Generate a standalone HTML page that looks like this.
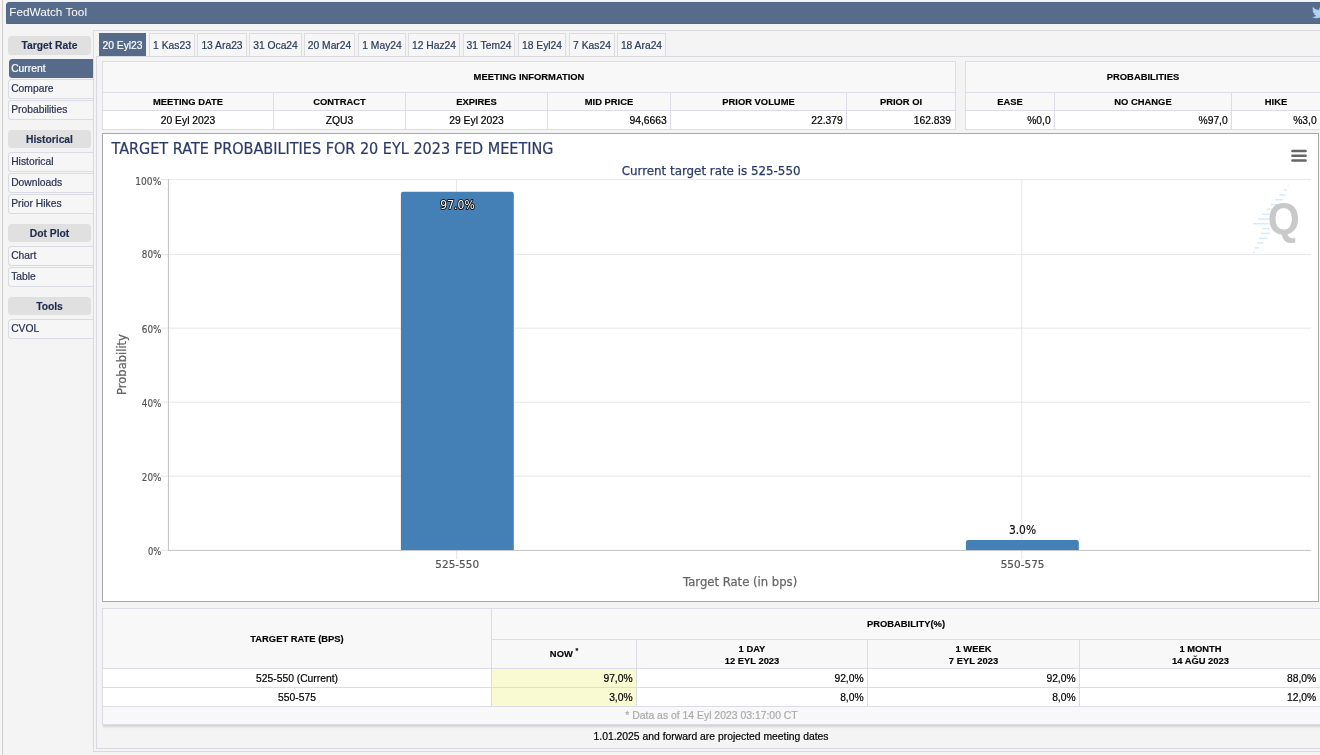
<!DOCTYPE html>
<html lang="tr">
<head>
<meta charset="utf-8">
<title>FedWatch Tool</title>
<style>
html,body{margin:0;padding:0;}
body{width:1320px;height:755px;overflow:hidden;position:relative;background:#f4f4f4;font-family:"Liberation Sans",Arial,Helvetica,sans-serif;font-size:12px;color:#000;}
#root{position:absolute;left:0;top:0;width:1320px;height:755px;overflow:hidden;will-change:transform;}
.abs{position:absolute;}
#leftline{left:2px;top:0;width:1px;height:755px;background:#cfcfcf;}
#hdr{left:6px;top:2px;width:1330px;height:22px;box-sizing:border-box;border:1px solid #50678a;background:#576c8b;border-radius:3px 0 0 0;color:#fff;font-size:11.75px;line-height:17px;}
#hdr span{position:absolute;left:2.3px;top:0;white-space:nowrap;}
/* nav */
.nh{position:absolute;left:8px;width:83px;height:18.5px;background:#e0e0e0;border-radius:3.5px;color:#1f2a4d;font-weight:bold;font-size:10.3px;line-height:19.5px;text-align:center;}
.ni{position:absolute;left:8px;width:81.8px;height:18px;border:1px solid #dbdbe3;border-right:none;border-radius:3.5px 0 0 3.5px;color:#2a3152;font-size:10.3px;line-height:18px;padding-left:2.2px;box-sizing:content-box;background:#f6f6f6;}
.ni.act{background:#566b8a;border-color:#566b8a;color:#fff;left:9px;width:81.8px;height:17px;line-height:18px;padding-left:1.2px;}
/* panes */
#pane{left:93px;top:30px;width:1300px;height:722px;border:1px solid #d9d9df;box-sizing:border-box;}
#content{left:96px;top:56px;width:1300px;height:693px;border:1px solid #d9d9df;box-sizing:border-box;background:#f4f4f4;}
.tab{position:absolute;top:33px;height:23px;box-sizing:border-box;border:1px solid #dcdce1;border-bottom:none;background:#f6f6f6;color:#2a3a5c;font-size:10.3px;line-height:23px;text-align:center;white-space:nowrap;}
.tab.act{background:#566b8a;border-color:#566b8a;color:#fff;}
/* tables */
.cell{position:absolute;box-sizing:border-box;border:1px solid #dcdde4;font-size:10.3px;white-space:nowrap;overflow:hidden;}
.th{background:#f8f8f8;font-weight:bold;text-align:center;font-size:9.4px;}
.td{background:#fff;}
.td,.ni,.tab,.st{-webkit-text-stroke:0.2px;}
.th,.nh{-webkit-text-stroke:0.15px;}
.c{text-align:center;}
.r{text-align:right;padding-right:3.4px;}
.r4{padding-right:3.3px;}
.y{background:#fafad2;}
</style>
</head>
<body>
<div id="root">
<div id="leftline" class="abs"></div>
<div id="hdr" class="abs"><span>FedWatch Tool</span></div>

<!-- NAV -->
<div class="nh" style="top:36px">Target Rate</div>
<div class="ni act" style="top:58.7px">Current</div>
<div class="ni" style="top:79.3px">Compare</div>
<div class="ni" style="top:99.9px">Probabilities</div>
<div class="nh" style="top:129.8px">Historical</div>
<div class="ni" style="top:152.3px">Historical</div>
<div class="ni" style="top:172.9px">Downloads</div>
<div class="ni" style="top:193.5px">Prior Hikes</div>
<div class="nh" style="top:223.5px">Dot Plot</div>
<div class="ni" style="top:245.9px">Chart</div>
<div class="ni" style="top:266.5px">Table</div>
<div class="nh" style="top:296.8px">Tools</div>
<div class="ni" style="top:319.2px">CVOL</div>

<div id="pane" class="abs"></div>
<div id="content" class="abs"></div>

<!-- TABS -->
<div class="tab act" style="left:99px;width:47px">20 Eyl23</div>
<div class="tab" style="left:149px;width:46px">1 Kas23</div>
<div class="tab" style="left:197px;width:50px">13 Ara23</div>
<div class="tab" style="left:249px;width:53px">31 Oca24</div>
<div class="tab" style="left:304px;width:51px">20 Mar24</div>
<div class="tab" style="left:358px;width:48px">1 May24</div>
<div class="tab" style="left:408px;width:52px">12 Haz24</div>
<div class="tab" style="left:463px;width:52px">31 Tem24</div>
<div class="tab" style="left:518px;width:48px">18 Eyl24</div>
<div class="tab" style="left:569px;width:46px">7 Kas24</div>
<div class="tab" style="left:617px;width:49px">18 Ara24</div>

<!-- MEETING INFORMATION TABLE -->
<div class="cell th" style="left:102px;top:61px;width:854px;height:32px;line-height:30px">MEETING INFORMATION</div>
<div class="cell th" style="left:102px;top:92px;width:172px;height:19px;line-height:17px">MEETING DATE</div>
<div class="cell th" style="left:273px;top:92px;width:133px;height:19px;line-height:17px">CONTRACT</div>
<div class="cell th" style="left:405px;top:92px;width:143px;height:19px;line-height:17px">EXPIRES</div>
<div class="cell th" style="left:547px;top:92px;width:124px;height:19px;line-height:17px">MID PRICE</div>
<div class="cell th" style="left:670px;top:92px;width:177px;height:19px;line-height:17px">PRIOR VOLUME</div>
<div class="cell th" style="left:846px;top:92px;width:110px;height:19px;line-height:17px">PRIOR OI</div>
<div class="cell td c" style="left:102px;top:110px;width:172px;height:20px;line-height:19.5px">20 Eyl 2023</div>
<div class="cell td c" style="left:273px;top:110px;width:133px;height:20px;line-height:19.5px">ZQU3</div>
<div class="cell td c" style="left:405px;top:110px;width:143px;height:20px;line-height:19.5px">29 Eyl 2023</div>
<div class="cell td r r4" style="left:547px;top:110px;width:124px;height:20px;line-height:19.5px">94,6663</div>
<div class="cell td r r4" style="left:670px;top:110px;width:177px;height:20px;line-height:19.5px">22.379</div>
<div class="cell td r r4" style="left:846px;top:110px;width:110px;height:20px;line-height:19.5px;padding-right:4px">162.839</div>

<!-- PROBABILITIES TABLE -->
<div class="cell th" style="left:965px;top:61px;width:356px;height:32px;line-height:30px">PROBABILITIES</div>
<div class="cell th" style="left:965px;top:92px;width:90px;height:19px;line-height:17px">EASE</div>
<div class="cell th" style="left:1054px;top:92px;width:178px;height:19px;line-height:17px">NO CHANGE</div>
<div class="cell th" style="left:1231px;top:92px;width:90px;height:19px;line-height:17px">HIKE</div>
<div class="cell td r r4" style="left:965px;top:110px;width:90px;height:20px;line-height:19.5px">%0,0</div>
<div class="cell td r r4" style="left:1054px;top:110px;width:178px;height:20px;line-height:19.5px">%97,0</div>
<div class="cell td r r4" style="left:1231px;top:110px;width:90px;height:20px;line-height:19.5px">%3,0</div>

<!-- CHART -->
<div id="chart" class="abs" style="left:102px;top:133px;width:1217px;height:469px;box-sizing:border-box;border:1px solid #a9a9a9;background:#fff;"></div>
<svg id="csvg" class="abs" style="left:0;top:0" width="1320" height="755" viewBox="0 0 1320 755" font-family="'DejaVu Sans','Liberation Sans',sans-serif">
<!-- gridlines -->
<g stroke="#e6e6e6" stroke-width="1">
<line x1="161" x2="1311" y1="179.4" y2="179.4"/>
<line x1="161" x2="1311" y1="254.4" y2="254.4"/>
<line x1="161" x2="1311" y1="328.2" y2="328.2"/>
<line x1="161" x2="1311" y1="402.2" y2="402.2"/>
<line x1="161" x2="1311" y1="476.2" y2="476.2"/>
<line x1="161" x2="169" y1="550.3" y2="550.3"/>
<line x1="456.6" x2="456.6" y1="179" y2="559"/>
<line x1="1021.8" x2="1021.8" y1="179" y2="559"/>
</g>
<!-- axes -->
<g stroke="#c2c2c2" stroke-width="1">
<line x1="168.4" x2="168.4" y1="179" y2="551"/>
<line x1="168" x2="1311" y1="550.4" y2="550.4"/>
</g>
<!-- bars -->
<path d="M400.9 550 V194 Q400.9 191.7 403.2 191.7 H511.5 Q513.8 191.7 513.8 194 V550 Z" fill="#4480b6"/>
<path d="M965.9 550 V542.3 Q965.9 540 968.2 540 H1076.5 Q1078.8 540 1078.8 542.3 V550 Z" fill="#4480b6"/>
<!-- titles -->
<text id="t_title" x="111.5" y="153.8" font-size="15" fill="#2b3a67" stroke="#2b3a67" stroke-width="0.2" textLength="442" lengthAdjust="spacingAndGlyphs">TARGET RATE PROBABILITIES FOR 20 EYL 2023 FED MEETING</text>
<text id="t_sub" x="621.7" y="175" font-size="12" fill="#2b3a67" stroke="#2b3a67" stroke-width="0.25" textLength="178.8" lengthAdjust="spacingAndGlyphs">Current target rate is 525-550</text>
<!-- y labels -->
<g font-size="10.3" fill="#555" stroke="#555" stroke-width="0.2">
<text x="135.3" y="184.7" textLength="26" lengthAdjust="spacingAndGlyphs">100%</text>
<text x="141.8" y="257.8" textLength="19.6" lengthAdjust="spacingAndGlyphs">80%</text>
<text x="141.8" y="332.5" textLength="19.6" lengthAdjust="spacingAndGlyphs">60%</text>
<text x="141.8" y="406.8" textLength="19.6" lengthAdjust="spacingAndGlyphs">40%</text>
<text x="141.8" y="480.8" textLength="19.6" lengthAdjust="spacingAndGlyphs">20%</text>
<text x="148" y="555" textLength="13.3" lengthAdjust="spacingAndGlyphs">0%</text>
</g>
<!-- x labels -->
<g font-size="10.3" fill="#555" stroke="#555" stroke-width="0.2">
<text x="435.3" y="567.9" textLength="43.8" lengthAdjust="spacingAndGlyphs">525-550</text>
<text x="1000.7" y="567.9" textLength="43.8" lengthAdjust="spacingAndGlyphs">550-575</text>
</g>
<text id="t_xt" x="683" y="586.2" font-size="12" fill="#666" stroke="#666" stroke-width="0.25" textLength="114.2" lengthAdjust="spacingAndGlyphs">Target Rate (in bps)</text>
<text id="t_yt" transform="translate(125.6 394.9) rotate(-90)" font-size="12" fill="#666" stroke="#666" stroke-width="0.25" textLength="60.8" lengthAdjust="spacingAndGlyphs">Probability</text>
<!-- data labels -->
<text x="440.3" y="209" font-size="12.2" fill="#fff" stroke="#111" stroke-width="2" stroke-linejoin="round" paint-order="stroke" textLength="34.4" lengthAdjust="spacingAndGlyphs">97.0%</text>
<text x="1008.9" y="533.7" font-size="13" fill="#111" stroke="#111" stroke-width="0.2" textLength="27.2" lengthAdjust="spacingAndGlyphs">3.0%</text>
<!-- menu -->
<g stroke="#666" stroke-width="2.6" stroke-linecap="round">
<line x1="1292.5" x2="1305.5" y1="151" y2="151"/>
<line x1="1292.5" x2="1305.5" y1="155.8" y2="155.8"/>
<line x1="1292.5" x2="1305.5" y1="160.5" y2="160.5"/>
</g>
<!-- logo -->
<g fill="#d9e9fb">
<rect x="1287.5" y="185" width="1.3" height="1"/>
<rect x="1283.7" y="189.2" width="3.2" height="1.5"/>
<rect x="1279.4" y="194.2" width="5.6" height="1.5"/>
<rect x="1275" y="199" width="7.6" height="1.5"/>
<rect x="1271" y="203.8" width="6" height="1.5"/>
<rect x="1266.5" y="208.6" width="4" height="1.5"/>
<rect x="1262" y="213.5" width="7.4" height="1.5"/>
<rect x="1257.7" y="218.3" width="11.7" height="1.5"/>
<rect x="1253" y="223" width="16.4" height="1.5"/>
<rect x="1262.5" y="227.9" width="7" height="1.5"/>
<rect x="1260.8" y="232.7" width="9" height="1.5"/>
<rect x="1259" y="237.5" width="8.7" height="1.5"/>
<rect x="1256.8" y="242.3" width="6.6" height="1.5"/>
<rect x="1254.7" y="247.1" width="4.3" height="1.5"/>
<rect x="1253" y="251.9" width="2" height="1.2"/>
</g>
<text id="t_q" x="1267.7" y="233.6" font-family="'Liberation Sans',sans-serif" font-weight="bold" font-size="43.5" fill="#c9c9c9" textLength="32" lengthAdjust="spacingAndGlyphs">Q</text>
</svg>
<svg class="abs" style="left:1311.7px;top:5.4px" width="14.65" height="14.65" viewBox="0 0 24 24"><path fill="#acd2f4" d="M23.953 4.57a10 10 0 01-2.825.775 4.958 4.958 0 002.163-2.723c-.951.555-2.005.959-3.127 1.184a4.92 4.92 0 00-8.384 4.482C7.69 8.095 4.067 6.13 1.64 3.162a4.822 4.822 0 00-.666 2.475c0 1.71.87 3.213 2.188 4.096a4.904 4.904 0 01-2.228-.616v.06a4.923 4.923 0 003.946 4.827 4.996 4.996 0 01-2.212.085 4.936 4.936 0 004.604 3.417 9.867 9.867 0 01-6.102 2.105c-.39 0-.779-.023-1.17-.067a13.995 13.995 0 007.557 2.209c9.053 0 13.998-7.496 13.998-13.985 0-.21 0-.42-.015-.63A9.935 9.935 0 0024 4.59z"/></svg>

<!-- BOTTOM TABLE -->
<div id="btshadow" class="abs" style="left:103px;top:608px;width:1230px;height:117px;box-shadow:0 2px 2px 0 rgba(0,0,0,0.14);"></div>
<div class="cell th" style="left:102px;top:608px;width:390px;height:61px;line-height:59px">TARGET RATE (BPS)</div>
<div class="cell th" style="left:491px;top:608px;width:830px;height:32px;line-height:30px">PROBABILITY(%)</div>
<div class="cell th" style="left:491px;top:639px;width:146px;height:30px;line-height:28px">NOW <sup style="font-size:7px;line-height:0;position:relative;top:0px">*</sup></div>
<div class="cell th" style="left:636px;top:639px;width:232px;height:30px;line-height:11.5px;padding-top:3px">1 DAY<br>12 EYL 2023</div>
<div class="cell th" style="left:867px;top:639px;width:213px;height:30px;line-height:11.5px;padding-top:3px">1 WEEK<br>7 EYL 2023</div>
<div class="cell th" style="left:1079px;top:639px;width:243px;height:30px;line-height:11.5px;padding-top:3px">1 MONTH<br>14 A&#286;U 2023</div>
<div class="cell td c" style="left:102px;top:668px;width:390px;height:20px;line-height:19.5px">525-550 (Current)</div>
<div class="cell td r y" style="left:491px;top:668px;width:146px;height:20px;line-height:19.5px">97,0%</div>
<div class="cell td r" style="left:636px;top:668px;width:232px;height:20px;line-height:19.5px">92,0%</div>
<div class="cell td r" style="left:867px;top:668px;width:213px;height:20px;line-height:19.5px">92,0%</div>
<div class="cell td r" style="left:1079px;top:668px;width:241.6px;height:20px;line-height:19.5px">88,0%</div>
<div class="cell td c" style="left:102px;top:687px;width:390px;height:20px;line-height:19.5px">550-575</div>
<div class="cell td r y" style="left:491px;top:687px;width:146px;height:20px;line-height:19.5px">3,0%</div>
<div class="cell td r" style="left:636px;top:687px;width:232px;height:20px;line-height:19.5px">8,0%</div>
<div class="cell td r" style="left:867px;top:687px;width:213px;height:20px;line-height:19.5px">8,0%</div>
<div class="cell td r" style="left:1079px;top:687px;width:241.6px;height:20px;line-height:19.5px">12,0%</div>
<div class="cell" style="left:102px;top:706px;width:1230px;height:19px;line-height:18px;background:#f8f8f8;color:#aaa;text-align:left;padding-left:522.3px;font-size:10.42px;-webkit-text-stroke:0.2px">* Data as of 14 Eyl 2023 03:17:00 CT</div>
<div class="abs st" style="left:96px;top:728px;width:1230px;height:18px;line-height:18px;font-size:10.36px;text-align:center;white-space:nowrap">1.01.2025 and forward are projected meeting dates</div>

</div>
</body>
</html>
